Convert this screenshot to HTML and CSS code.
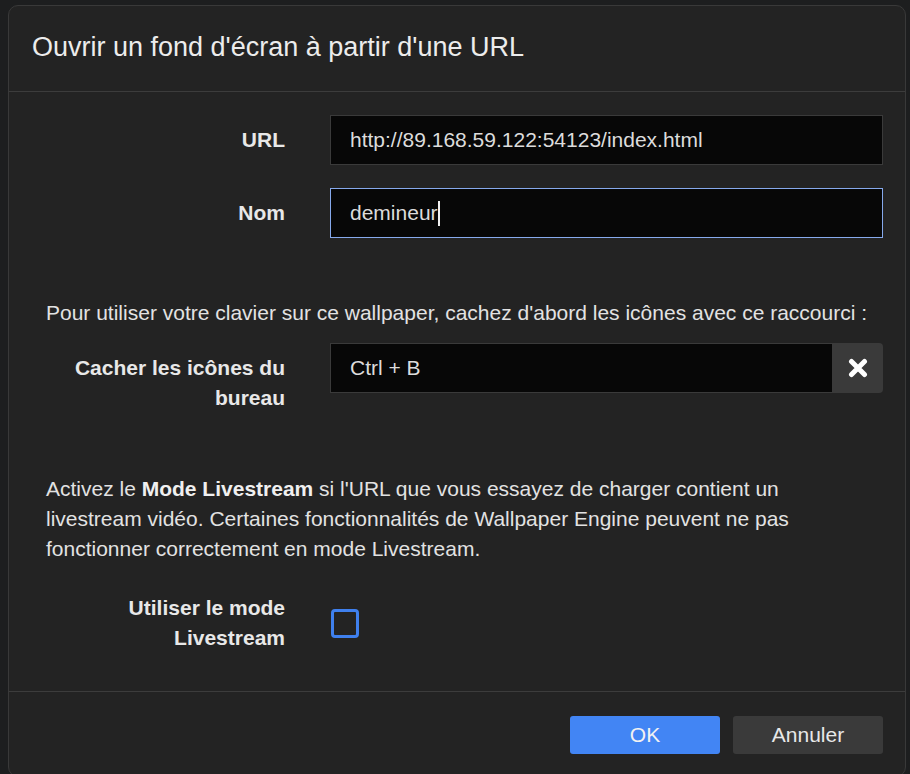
FILE: index.html
```html
<!DOCTYPE html>
<html lang="fr">
<head>
<meta charset="utf-8">
<title>Ouvrir un fond d'écran</title>
<link rel="stylesheet" href="styles.css">
</head>
<body>
<div class="dialog">
  <div class="dialog-header">
    <h1 class="dialog-title">Ouvrir un fond d'écran à partir d'une URL</h1>
  </div>
  <div class="dialog-body">
    <div class="row">
      <div class="label">URL</div>
      <div class="field"><div class="input">http://89.168.59.122:54123/index.html</div></div>
    </div>
    <div class="row row-nom">
      <div class="label">Nom</div>
      <div class="field"><div class="input input-focus">demineur<span class="caret"></span></div></div>
    </div>
    <p class="text text-first">Pour utiliser votre clavier sur ce wallpaper, cachez d'abord les icônes avec ce raccourci :</p>
    <div class="row row-shortcut">
      <div class="label">Cacher les icônes du bureau</div>
      <div class="field">
        <div class="input-group">
          <div class="input input-joined">Ctrl + B</div>
          <button class="clear-btn" type="button" aria-label="Effacer">
            <svg width="20" height="20" viewBox="0 0 20 20"><path d="M3.5 3.5 L16.5 16.5 M16.5 3.5 L3.5 16.5" stroke="#ffffff" stroke-width="5" stroke-linecap="round" fill="none"/></svg>
          </button>
        </div>
      </div>
    </div>
    <p class="text text-live">Activez le <b>Mode Livestream</b> si l'URL que vous essayez de charger contient un livestream vidéo. Certaines fonctionnalités de Wallpaper Engine peuvent ne pas fonctionner correctement en mode Livestream.</p>
    <div class="row row-check">
      <div class="label label-nopad">Utiliser le mode Livestream</div>
      <div class="field field-check"><span class="checkbox"></span></div>
    </div>
  </div>
  <div class="dialog-footer">
    <button class="btn btn-primary" type="button">OK</button>
    <button class="btn btn-secondary" type="button">Annuler</button>
  </div>
</div>
</body>
</html>
```
FILE: styles.css
```css
html, body {
  margin: 0;
  padding: 0;
}
body {
  background: #1d1e1f;
  font-family: "Liberation Sans", Arial, sans-serif;
  color: #e6e6e6;
  width: 910px;
  height: 774px;
  overflow: hidden;
}
.dialog {
  margin: 5px 0 0 8px;
  width: 898px;
  box-sizing: border-box;
  background: #232323;
  border: 1px solid #393939;
  border-radius: 10px;
}
.dialog-header {
  padding: 27px 23px 30px;
  border-bottom: 1px solid #3c3c3c;
}
.dialog-title {
  margin: 0;
  font-size: 27px;
  line-height: 28px;
  font-weight: normal;
  color: #ececec;
}
.dialog-body {
  padding: 23px 22px 38px 37px;
  font-size: 21px;
}
.row {
  display: flex;
  gap: 45px;
}
.row-nom {
  margin-top: 23px;
}
.label {
  width: 239px;
  flex: none;
  text-align: right;
  font-weight: bold;
  line-height: 30px;
  padding-top: 10px;
  color: #e8e8e8;
}
.label-nopad {
  padding-top: 0;
}
.field {
  flex: 1;
}
.input {
  height: 50px;
  box-sizing: border-box;
  background: #070707;
  border: 1px solid #3a3a3a;
  padding: 0 19px;
  display: flex;
  align-items: center;
  font-size: 21px;
  color: #dcdcdc;
}
.input-focus {
  border-color: #86a9ec;
}
.caret {
  display: inline-block;
  width: 2px;
  height: 25px;
  background: #f0f0f0;
  margin-left: 0;
}
.text {
  margin: 0 12px 0 0;
  line-height: 30px;
  color: #e2e2e2;
}
.text b {
  color: #f0f0f0;
}
.text-first {
  margin-top: 60px;
}
.row-shortcut {
  margin-top: 15px;
}
.input-group {
  display: flex;
}
.input-joined {
  flex: 1;
  border-right: none;
}
.clear-btn {
  width: 51px;
  height: 50px;
  flex: none;
  border: none;
  padding: 0;
  margin: 0;
  background: #3a3a3a;
  border-radius: 0 4px 4px 0;
  display: flex;
  align-items: center;
  justify-content: center;
}
.text-live {
  margin-top: 61px;
}
.row-check {
  margin-top: 29px;
  align-items: center;
}
.field-check {
  display: flex;
  align-items: center;
}
.checkbox {
  display: block;
  width: 28px;
  height: 29px;
  box-sizing: border-box;
  border: 3px solid #3f80ee;
  border-radius: 4px;
  margin-left: 1px;
}
.dialog-footer {
  border-top: 1px solid #3c3c3c;
  padding: 24px 22px 22px;
  display: flex;
  justify-content: flex-end;
  gap: 13px;
}
.btn {
  width: 150px;
  height: 38px;
  border: none;
  border-radius: 3px;
  font-family: "Liberation Sans", Arial, sans-serif;
  font-size: 21px;
  color: #f2f2f2;
  padding: 0;
}
.btn-primary {
  background: #4285f4;
}
.btn-secondary {
  background: #3a3a3a;
  color: #e8e8e8;
}
```
